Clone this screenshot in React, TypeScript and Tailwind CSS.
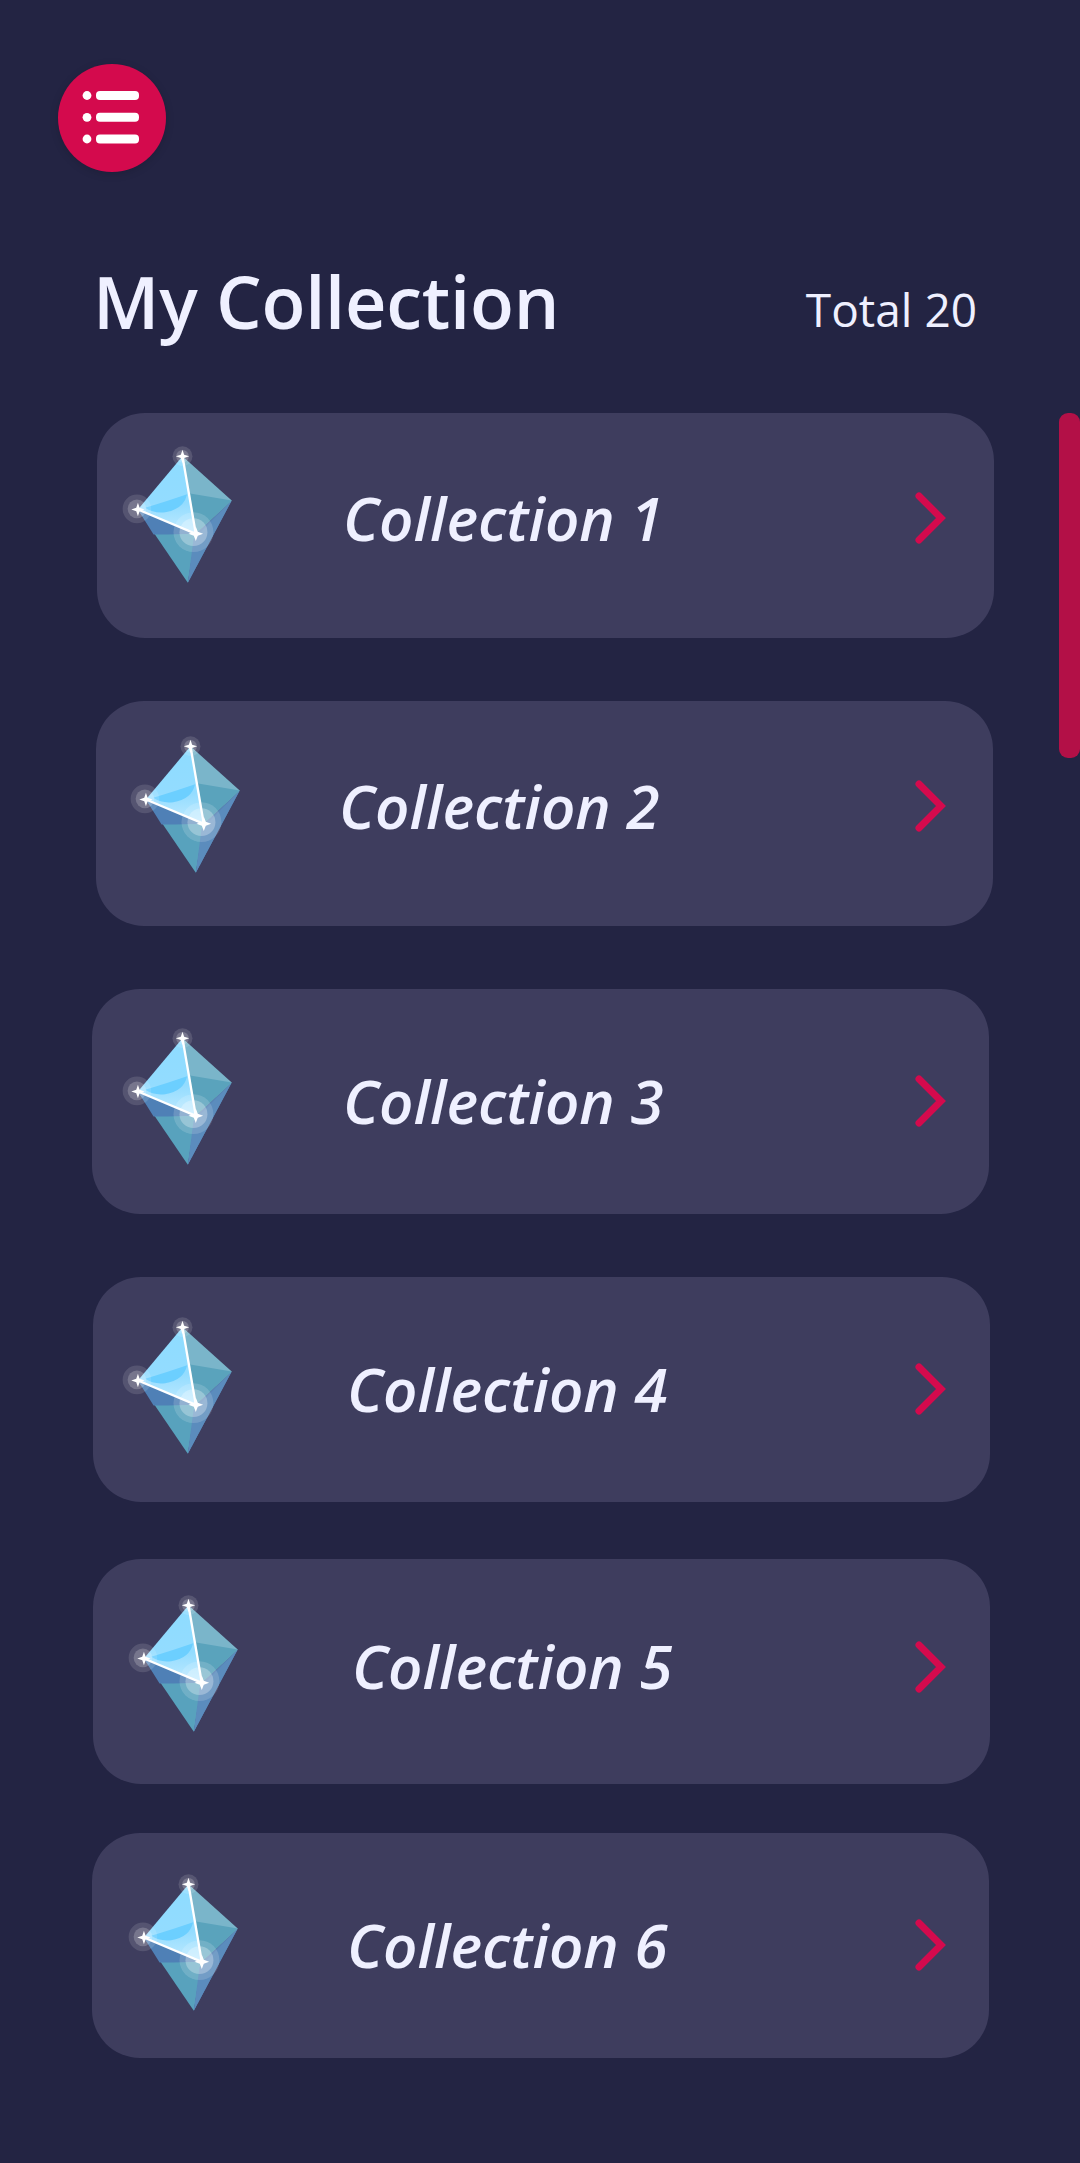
const rows = [
  { n: 1, card: "ml-[97px] mt-[0px]", crystal: "ml-[23px] mt-[30px]", label: "ml-[106px] mb-[15px]", chevron: "mr-[47px] mb-[15px]" },
  { n: 2, card: "ml-[96px] mt-[63px]", crystal: "ml-[32px] mt-[32px]", label: "ml-[94px] mb-[15px]", chevron: "mr-[46px] mb-[15px]" },
  { n: 3, card: "ml-[92px] mt-[63px]", crystal: "ml-[28px] mt-[36px]", label: "ml-[106px] mb-[1px]", chevron: "mr-[42px] mb-[1px]" },
  { n: 4, card: "ml-[93px] mt-[63px]", crystal: "ml-[27px] mt-[37px]", label: "ml-[110px] mb-[1px]", chevron: "mr-[43px] mb-[1px]" },
  { n: 5, card: "ml-[93px] mt-[57px]", crystal: "ml-[33px] mt-[33px]", label: "ml-[109px] mb-[11px]", chevron: "mr-[43px] mb-[9px]" },
  { n: 6, card: "ml-[92px] mt-[49px]", crystal: "ml-[34px] mt-[38px]", label: "ml-[104px] mb-[1px]", chevron: "mr-[42px] mb-[1px]" },
];

function Crystal({ id, className }: { id: number; className: string }) {
  const T = "277,170";
  const R = "425,303";
  const B = "293,550";
  const L = "143,330";
  const C = "317,403";
  return (
    <svg viewBox="90 130 350 430" className={className} aria-hidden="true">
      <defs>
        <linearGradient id={`lt${id}`} x1="0" y1="0" x2="0" y2="1">
          <stop offset="0" stopColor="#8edcff" />
          <stop offset="0.6" stopColor="#93dcff" />
          <stop offset="1" stopColor="#bfeaff" />
        </linearGradient>
      </defs>
      <polygon points={`${L} ${C} ${B}`} fill="#58a2bd" />
      <polygon points={`${C} ${R} ${B}`} fill="#5684b8" />
      <polygon points="143,330 317,403 230,405 190,405" fill="#4f80b6" />
      <polygon points="310,420 425,303 293,550" fill="#5b8cbd" />
      <polygon points={`${T} ${R} ${C}`} fill="#7ab5ca" />
      <polygon points="300,282 425,303 317,403" fill="#5aa3bc" />
      <polygon points={`${T} ${L} ${C}`} fill={`url(#lt${id})`} />
      <path d="M165,325 Q230,305 291,284 Q280,330 225,338 Q190,342 165,325 Z" fill="#6ccfff" />
      <circle cx="277" cy="170" r="30" fill="#ffffff" opacity="0.13" />
      <circle cx="277" cy="170" r="19" fill="#ffffff" opacity="0.2" />
      <circle cx="140" cy="328" r="43" fill="#ffffff" opacity="0.12" />
      <circle cx="140" cy="328" r="28" fill="#ffffff" opacity="0.2" />
      <circle cx="310" cy="398" r="60" fill="#ffffff" opacity="0.15" />
      <circle cx="310" cy="398" r="42" fill="#ffffff" opacity="0.28" />
      <polyline points="277,170 317,403 143,330" fill="none" stroke="#ffffff" strokeWidth="7" />
      <path d="M277,150 L282,165 L297,170 L282,175 L277,190 L272,175 L257,170 L272,165 Z" fill="#ffffff" />
      <path d="M143,310 L148,325 L163,330 L148,335 L143,350 L138,335 L123,330 L138,325 Z" fill="#ffffff" />
      <path d="M317,381 L323,397 L339,403 L323,409 L317,425 L311,409 L295,403 L311,397 Z" fill="#ffffff" />
    </svg>
  );
}

export default function App() {
  return (
    <div className="h-[2163px] w-[1080px] overflow-hidden bg-[#232443] relative font-['Open_Sans','Noto_Sans',sans-serif] text-[#eff0ff]">
      <button className="ml-[58px] mt-[64px] flex h-[108px] w-[108px] items-center justify-center rounded-full bg-[#d40a4d] shadow-[0_2px_8px_rgba(0,0,0,0.15)]">
        <svg width="60" height="53" viewBox="0 0 60 53" aria-hidden="true" className="mb-[2px]">
          <circle cx="5" cy="4.5" r="4.4" fill="#ffffff" />
          <circle cx="5" cy="26.3" r="4.4" fill="#ffffff" />
          <circle cx="5" cy="48" r="4.4" fill="#ffffff" />
          <rect x="14" y="0" width="43" height="9" rx="4" fill="#ffffff" />
          <rect x="14" y="21.8" width="43" height="9" rx="4" fill="#ffffff" />
          <rect x="14" y="43.5" width="43" height="9" rx="4" fill="#ffffff" />
        </svg>
      </button>

      <div className="mt-[80px] flex h-[81px] items-center justify-between pl-[93px] pr-[103px]">
        <h1 className="mt-[16px] text-[72px] leading-none font-semibold tracking-[-0.2px]">My Collection</h1>
        <span className="mt-[33px] text-[46px] leading-none font-medium">Total 20</span>
      </div>

      <div className="mt-[80px]">
        {rows.map((r) => (
          <div key={r.n} className={`flex h-[225px] w-[897px] items-center rounded-[48px] bg-[#3e3d5e] ${r.card}`}>
            <Crystal id={r.n} className={`h-[143px] w-[117px] shrink-0 self-start ${r.crystal}`} />
            <span className={`text-[60px] leading-none font-semibold italic ${r.label}`}>Collection {r.n}</span>
            <svg width="33" height="54" viewBox="0 0 33 54" aria-hidden="true" className={`ml-auto ${r.chevron}`}>
              <polyline points="5,5 27,27 5,49" fill="none" stroke="#d40a4d" strokeWidth="7" strokeLinecap="round" />
            </svg>
          </div>
        ))}
      </div>

      <div className="absolute top-[413px] right-0 h-[345px] w-[21px] rounded-[9px] bg-[#b31047]" />
    </div>
  );
}
